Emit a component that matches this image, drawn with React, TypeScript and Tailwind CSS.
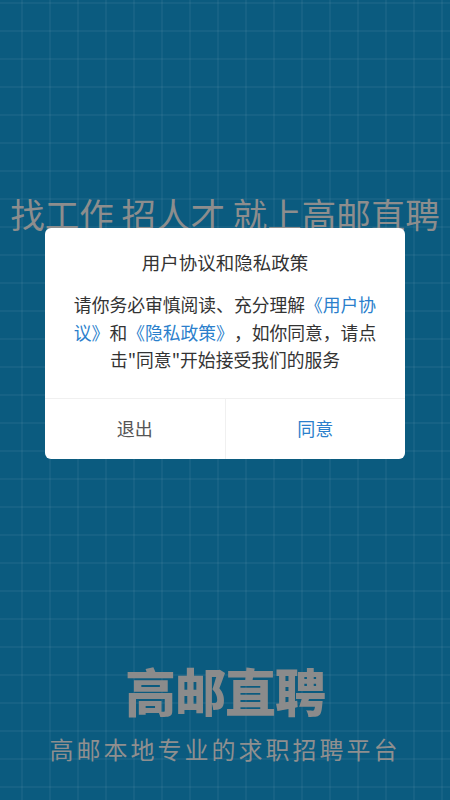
import React from 'react';

const cjk = "font-['Noto_Sans_CJK_SC','Noto_Sans',sans-serif]";

const App: React.FC = () => {
  return (
    <div
      className={`relative h-[800px] w-full overflow-hidden bg-[#0b5b7f] ${cjk} bg-[linear-gradient(to_right,rgba(255,255,255,0.045)_2px,transparent_2px),linear-gradient(to_bottom,rgba(255,255,255,0.045)_2px,transparent_2px)] bg-[size:28px_28px] bg-[position:21px_2px]`}
    >
      {/* page content behind the dialog */}
      <div className="flex h-full flex-col items-center">
        <h1 className="pt-[193px] text-[34.5px] leading-[40px] font-normal text-[#8d8d8d] whitespace-nowrap">
          找工作 招人才 就上高邮直聘
        </h1>
        <div className="flex-1" />
        <div className="text-[51px] leading-[56px] font-black text-[#8b8b8b] tracking-[-1px]">高邮直聘</div>
        <div className="mt-[16px] mb-[36px] text-[24px] leading-[30px] tracking-[3px] text-[#8f8f8f]">
          高邮本地专业的求职招聘平台
        </div>
      </div>

      {/* agreement dialog */}
      <div className="absolute left-[45px] top-[228px] w-[360px] rounded-[6px] bg-white">
        <div className="px-[26px] pt-[21px] pb-[24px] text-center [text-spacing-trim:space-all]">
          <div className="text-[18.5px] leading-[26px] text-[#333]">用户协议和隐私政策</div>
          <p className="mt-[16px] text-[17.8px] leading-[27.5px] text-[#333]">
            请你务必审慎阅读、充分理解
            <span className="text-[#2b7fcc]">《用户协议》</span>和
            <span className="text-[#2b7fcc]">《隐私政策》</span>，如你同意，请点击"同意"开始接受我们的服务
          </p>
        </div>
        <div className="flex h-[61px] border-t border-[#f0f0f0]">
          <button className="flex-1 text-[18px] text-[#555]">退出</button>
          <div className="w-px bg-[#f0f0f0]" />
          <button className="flex-1 text-[18px] text-[#2b7fcc]">同意</button>
        </div>
      </div>
    </div>
  );
};

export default App;
